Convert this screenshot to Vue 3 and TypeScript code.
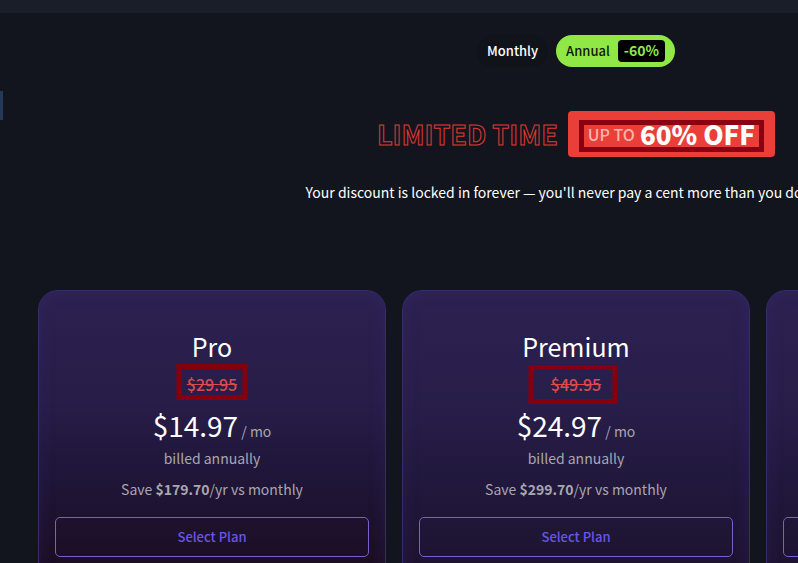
<script setup lang="ts">
import { ref } from 'vue'

interface Plan {
  id: string
  name: string
  was: string
  price: string
  saving: string
}

const billing = ref<'monthly' | 'annual'>('annual')

const plans: Plan[] = [
  { id: 'pro', name: 'Pro', was: '$29.95', price: '$14.97', saving: '$179.70' },
  { id: 'premium', name: 'Premium', was: '$49.95', price: '$24.97', saving: '$299.70' },
  { id: 'extra', name: '', was: '', price: '', saving: '' },
]
</script>

<template>
  <div class="viewport">
    <div class="topbar"></div>
    <div class="side-tab"></div>
    <main class="page">
      <div class="toggle">
        <button class="period" :class="{ active: billing === 'monthly' }" type="button" @click="billing = 'monthly'">Monthly</button>
        <button class="period" :class="{ active: billing === 'annual' }" type="button" @click="billing = 'annual'">
          Annual <span class="percent">-60%</span>
        </button>
      </div>

      <h1 class="offer">
        <span class="outlined">LIMITED TIME</span>
        <span class="banner">
          <span class="banner-frame"><small>UP TO</small><strong>60% OFF</strong></span>
        </span>
      </h1>
      <p class="promise">Your discount is locked in forever — you'll never pay a cent more than you do today.</p>

      <div class="plans">
        <section v-for="plan in plans" :key="plan.id" class="card" :class="plan.id">
          <h2>{{ plan.name }}</h2>
          <p class="was"><s v-if="plan.was">{{ plan.was }}</s></p>
          <p class="price">{{ plan.price }}<span v-if="plan.price" class="unit"> / mo</span></p>
          <p class="note"><template v-if="plan.price">billed annually</template></p>
          <p class="note saving"><template v-if="plan.saving">Save <b>{{ plan.saving }}</b>/yr vs monthly</template></p>
          <button class="select" type="button" :aria-label="`Select ${plan.name} plan`"><template v-if="plan.name">Select Plan</template></button>
        </section>
      </div>
    </main>
  </div>
</template>

<style>
body {
  background: #12151d;
}
</style>

<style scoped>
.viewport {
  position: relative;
  height: 100vh;
  overflow: hidden;
  background: #12151d;
  color: #fff;
  font-family: "Noto Sans CJK SC", "Noto Sans", sans-serif;
}

.viewport *,
.viewport *::after {
  box-sizing: border-box;
}

.topbar {
  height: 13px;
  background: #1a1e29;
}

.side-tab {
  position: absolute;
  top: 91px;
  left: 0;
  width: 3px;
  height: 29px;
  background: #263858;
}

.page {
  min-width: 1152px;
  padding: 22px 38px 0;
}

.toggle {
  display: flex;
  justify-content: center;
  gap: 8px;
}

.period {
  display: flex;
  align-items: center;
  gap: 8px;
  height: 32px;
  padding: 0 10px;
  border: 0;
  border-radius: 16px;
  background: #10131a;
  color: #fff;
  font: 500 13px/20px "Noto Sans CJK SC", sans-serif;
}

.period.active {
  background: #8fe846;
  color: #10190d;
}

.percent {
  padding: 0 6px 2px;
  border-radius: 4px;
  background: #000;
  color: #8fe846;
  font-size: 14px;
  font-weight: 700;
  line-height: 20px;
}

.offer {
  display: flex;
  align-items: center;
  justify-content: center;
  gap: 10px;
  margin: 44px 0 0;
  font-size: 26px;
  line-height: 32px;
}

.outlined {
  color: #12151d;
  font-size: 27px;
  font-weight: 700;
  -webkit-text-stroke: 1px #e03834;
}

.banner {
  padding: 9px 11px 5px;
  border-radius: 4px;
  background: #e93f38;
}

.banner-frame {
  display: flex;
  align-items: flex-start;
  gap: 5px;
  height: 32px;
  padding: 0 4px;
  border: 5px solid #8b0012;
  line-height: 18px;
}

.banner small {
  color: #fbb4ae;
  font-size: 16px;
  font-weight: 500;
}

.promise {
  margin: 23px 0 0;
  font-size: 14px;
  line-height: 24px;
  text-align: center;
}

.plans {
  display: grid;
  grid-template-columns: repeat(3, 1fr);
  gap: 16px;
  margin-top: 86px;
}

.card {
  display: flex;
  flex-direction: column;
  height: 600px;
  padding: 37px 16px 0;
  border: 1px solid #352c68;
  border-radius: 20px;
  background: linear-gradient(#2c2150 0, #271d48 110px, #20163a 180px, #1b0e23 275px);
  box-shadow: inset 0 0 16px rgba(65, 49, 142, 0.25);
  text-align: center;
}

.card.premium,
.card.extra {
  background: linear-gradient(#2c2150 0, #281e4a 110px, #21183d 190px, #1e1330 275px);
}

.card h2,
.card p {
  margin: 0;
}

.card h2 {
  height: 36px;
  font-size: 25px;
  font-weight: 400;
  line-height: 36px;
}

.card .was {
  position: relative;
  height: 40px;
  color: #dc4a4c;
  font-size: 16px;
  font-weight: 500;
  line-height: 40px;
}

.was::after {
  position: absolute;
  top: 0;
  left: 50%;
  width: 71px;
  height: 36px;
  border: 5px solid #85000f;
  transform: translateX(-50%);
  content: "";
}

.premium .was::after {
  top: 1px;
  left: calc(50% - 3px);
  width: 89px;
  height: 39px;
}

.extra .was::after {
  display: none;
}

.price {
  height: 42px;
  font-size: 28px;
  line-height: 42px;
}

.unit {
  color: #a9a6ad;
  font-size: 14px;
}

.note {
  height: 24px;
  color: #a9a6ad;
  font-size: 14px;
  line-height: 24px;
}

.card .saving {
  margin-top: 7px;
}

.select {
  height: 40px;
  margin-top: 16px;
  border: 1px solid #7461cb;
  border-radius: 5px;
  background: transparent;
  color: #6757e4;
  font: 500 13px/20px "Noto Sans CJK SC", sans-serif;
}
</style>
